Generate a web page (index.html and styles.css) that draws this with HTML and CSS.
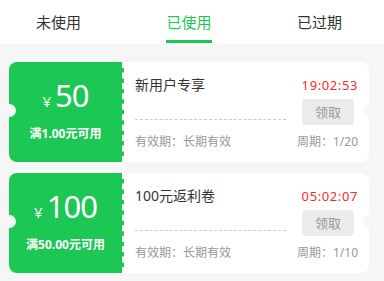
FILE: index.html
```html
<!DOCTYPE html>
<html lang="zh-CN">
  <head>
    <meta charset="utf-8">
    <title>优惠券</title>
    <link rel="stylesheet" href="styles.css">
  </head>
  <body>
    <div class="tabs">
      <div class="tab">未使用</div>
      <div class="tab active">已使用</div>
      <div class="tab">已过期</div>
    </div>

    <div class="list">
      <div class="coupon">
        <div class="coupon-left">
          <div class="amount"><span class="yen">¥</span><span class="num">50</span></div>
          <div class="cond">满1.00元可用</div>
        </div>
        <div class="coupon-right">
          <div class="row-top">
            <span class="title">新用户专享</span>
            <span class="time">19:02:53</span>
          </div>
          <div class="row-mid">
            <div class="dash"></div>
            <div class="btn">领取</div>
          </div>
          <div class="row-bottom">
            <span>有效期：长期有效</span>
            <span>周期：1/20</span>
          </div>
        </div>
      </div>

      <div class="coupon">
        <div class="coupon-left">
          <div class="amount"><span class="yen">¥</span><span class="num">100</span></div>
          <div class="cond">满50.00元可用</div>
        </div>
        <div class="coupon-right">
          <div class="row-top">
            <span class="title">100元返利卷</span>
            <span class="time">05:02:07</span>
          </div>
          <div class="row-mid">
            <div class="dash"></div>
            <div class="btn">领取</div>
          </div>
          <div class="row-bottom">
            <span>有效期：长期有效</span>
            <span>周期：1/10</span>
          </div>
        </div>
      </div>
    </div>
  </body>
</html>
```

FILE: styles.css
```css
* {
    margin: 0;
    padding: 0;
    box-sizing: border-box;
}
body {
    background: #f6f6f6;
    font-family: "Noto Sans", "Noto Sans CJK SC", sans-serif;
    color: #333;
}
.tabs {
    height: 44px;
    background: #fff;
    display: flex;
    justify-content: space-between;
    padding: 0 42px 0 36px;
}
.tab {
    font-size: 15px;
    line-height: 44px;
    color: #333;
    position: relative;
}
.tab.active {
    color: #1cc754;
}
.tab.active::after {
    content: "";
    position: absolute;
    left: 0;
    right: 0;
    bottom: 1px;
    height: 3px;
    background: #1cc754;
}
.list {
    padding: 18px 15px 0 9px;
}
.coupon {
    height: 100px;
    margin-bottom: 11px;
    display: flex;
    position: relative;
}
.coupon::before,
.coupon::after {
    content: "";
    position: absolute;
    top: 50%;
    width: 13px;
    height: 13px;
    margin-top: -8px;
    border-radius: 50%;
    background: #f6f6f6;
}
.coupon::before {
    left: -6px;
}
.coupon::after {
    right: -7px;
}
.coupon-left {
    width: 115px;
    background: #1cc754;
    border-radius: 8px 0 0 8px;
    border-right: 2px dashed #fff;
    color: #fff;
    display: flex;
    flex-direction: column;
    align-items: center;
    padding-top: 13px;
}
.amount {
    display: flex;
    align-items: baseline;
    line-height: 40px;
}
.yen {
    font-size: 15px;
    margin-right: 4px;
}
.num {
    font-size: 31px;
    letter-spacing: -1px;
}
.cond {
    font-size: 12px;
    font-weight: bold;
    margin-top: 3px;
}
.coupon-right {
    flex: 1;
    background: #fff;
    border-radius: 0 8px 8px 0;
    padding: 13px 11px 0 11px;
    display: flex;
    flex-direction: column;
}
.row-top {
    display: flex;
    justify-content: space-between;
    align-items: center;
    line-height: 20px;
}
.title {
    font-size: 14px;
    color: #333;
}
.time {
    font-size: 13px;
    color: #f72b2b;
    letter-spacing: 0.6px;
}
.row-mid {
    display: flex;
    align-items: flex-end;
    margin-top: 4px;
    padding-right: 4px;
}
.dash {
    flex: 1;
    border-bottom: 1px dashed #ccc;
    margin: 0 16px 5px 0;
}
.btn {
    width: 52px;
    height: 26px;
    line-height: 26px;
    text-align: center;
    border-radius: 4px;
    background: #ebebeb;
    color: #999;
    font-size: 13px;
}
.row-bottom {
    display: flex;
    justify-content: space-between;
    font-size: 12px;
    line-height: 16px;
    color: #999;
    margin-top: 9px;
}
```
